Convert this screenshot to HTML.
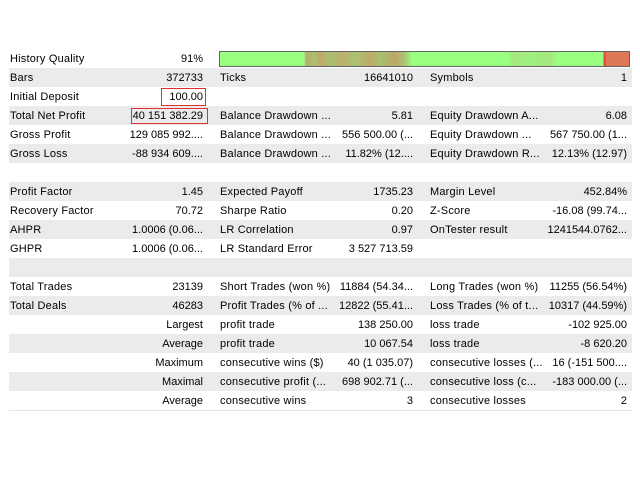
<!DOCTYPE html>
<html><head><meta charset="utf-8"><style>
body{margin:0;width:640px;height:480px;background:#fff;font-family:"Liberation Sans",sans-serif;font-size:11px;color:#000;position:relative;overflow:hidden}
.r{position:absolute;left:9px;width:623px;height:19px}
.g{background:#ebebeb}
.t{position:absolute;top:3px;white-space:nowrap;line-height:14px}
.l1,.l2,.l3{letter-spacing:0.2px;font-size:11px}
.l1{left:1px}.v1{right:429px;text-align:right}
.l2{left:211px}.v2{right:219px;text-align:right}
.l3{left:421px}.v3{right:5px;text-align:right}
.box{position:absolute;border:1px solid #e03030;box-sizing:border-box}
</style></head><body>
<div class="r" style="top:49px"><span class="t l1">History Quality</span><span class="t v1">91%</span></div>
<div style="position:absolute;left:219px;top:51px;width:411px;height:16px;box-sizing:border-box;border:1px solid #666;background:linear-gradient(90deg,#99ff80 0,#99ff80 84px,#b8b070 86px,#a8c070 95px,#c0a868 100px,#a8c070 110px,#bfae6c 122px,#a9c372 135px,#c0aa68 150px,#a8c070 160px,#bca86a 175px,#aac472 185px,#99ff80 192px,#99ff80 289px,#a6e680 292px,#9ef07e 310px,#a6e680 330px,#99ff80 338px,#99ff80 383px,#ee4a3a 384px,#ee4a3a 386px,#dd7755 386px)"></div>
<div class="r g" style="top:68px"><span class="t l1">Bars</span><span class="t v1">372733</span><span class="t l2">Ticks</span><span class="t v2">16641010</span><span class="t l3">Symbols</span><span class="t v3">1</span></div>
<div class="r" style="top:87px"><span class="t l1">Initial Deposit</span><span class="t v1">100.00</span></div>
<div class="r g" style="top:106px"><span class="t l1">Total Net Profit</span><span class="t v1">40 151 382.29</span><span class="t l2">Balance Drawdown ...</span><span class="t v2">5.81</span><span class="t l3">Equity Drawdown A...</span><span class="t v3">6.08</span></div>
<div class="r" style="top:125px"><span class="t l1">Gross Profit</span><span class="t v1">129 085 992....</span><span class="t l2">Balance Drawdown ...</span><span class="t v2">556 500.00 (...</span><span class="t l3">Equity Drawdown ...</span><span class="t v3">567 750.00 (1...</span></div>
<div class="r g" style="top:144px"><span class="t l1">Gross Loss</span><span class="t v1">-88 934 609....</span><span class="t l2">Balance Drawdown ...</span><span class="t v2">11.82% (12....</span><span class="t l3">Equity Drawdown R...</span><span class="t v3">12.13% (12.97)</span></div>
<div class="r g" style="top:182px"><span class="t l1">Profit Factor</span><span class="t v1">1.45</span><span class="t l2">Expected Payoff</span><span class="t v2">1735.23</span><span class="t l3">Margin Level</span><span class="t v3">452.84%</span></div>
<div class="r" style="top:201px"><span class="t l1">Recovery Factor</span><span class="t v1">70.72</span><span class="t l2">Sharpe Ratio</span><span class="t v2">0.20</span><span class="t l3">Z-Score</span><span class="t v3">-16.08 (99.74...</span></div>
<div class="r g" style="top:220px"><span class="t l1">AHPR</span><span class="t v1">1.0006 (0.06...</span><span class="t l2">LR Correlation</span><span class="t v2">0.97</span><span class="t l3">OnTester result</span><span class="t v3">1241544.0762...</span></div>
<div class="r" style="top:239px"><span class="t l1">GHPR</span><span class="t v1">1.0006 (0.06...</span><span class="t l2">LR Standard Error</span><span class="t v2">3 527 713.59</span></div>
<div class="r g" style="top:258px"></div>
<div class="r" style="top:277px"><span class="t l1">Total Trades</span><span class="t v1">23139</span><span class="t l2">Short Trades (won %)</span><span class="t v2">11884 (54.34...</span><span class="t l3">Long Trades (won %)</span><span class="t v3">11255 (56.54%)</span></div>
<div class="r g" style="top:296px"><span class="t l1">Total Deals</span><span class="t v1">46283</span><span class="t l2">Profit Trades (% of ...</span><span class="t v2">12822 (55.41...</span><span class="t l3">Loss Trades (% of t...</span><span class="t v3">10317 (44.59%)</span></div>
<div class="r" style="top:315px"><span class="t v1">Largest</span><span class="t l2">profit trade</span><span class="t v2">138 250.00</span><span class="t l3">loss trade</span><span class="t v3">-102 925.00</span></div>
<div class="r g" style="top:334px"><span class="t v1">Average</span><span class="t l2">profit trade</span><span class="t v2">10 067.54</span><span class="t l3">loss trade</span><span class="t v3">-8 620.20</span></div>
<div class="r" style="top:353px"><span class="t v1">Maximum</span><span class="t l2">consecutive wins ($)</span><span class="t v2">40 (1 035.07)</span><span class="t l3">consecutive losses (...</span><span class="t v3">16 (-151 500....</span></div>
<div class="r g" style="top:372px"><span class="t v1">Maximal</span><span class="t l2">consecutive profit (...</span><span class="t v2">698 902.71 (...</span><span class="t l3">consecutive loss (c...</span><span class="t v3">-183 000.00 (...</span></div>
<div class="r" style="top:391px;border-bottom:1px solid #e4e4e4;height:19px"><span class="t v1">Average</span><span class="t l2">consecutive wins</span><span class="t v2">3</span><span class="t l3">consecutive losses</span><span class="t v3">2</span></div>
<div class="box" style="left:161px;top:88px;width:45px;height:18px"></div>
<div class="box" style="left:131px;top:108px;width:77px;height:16px"></div>
</body></html>
